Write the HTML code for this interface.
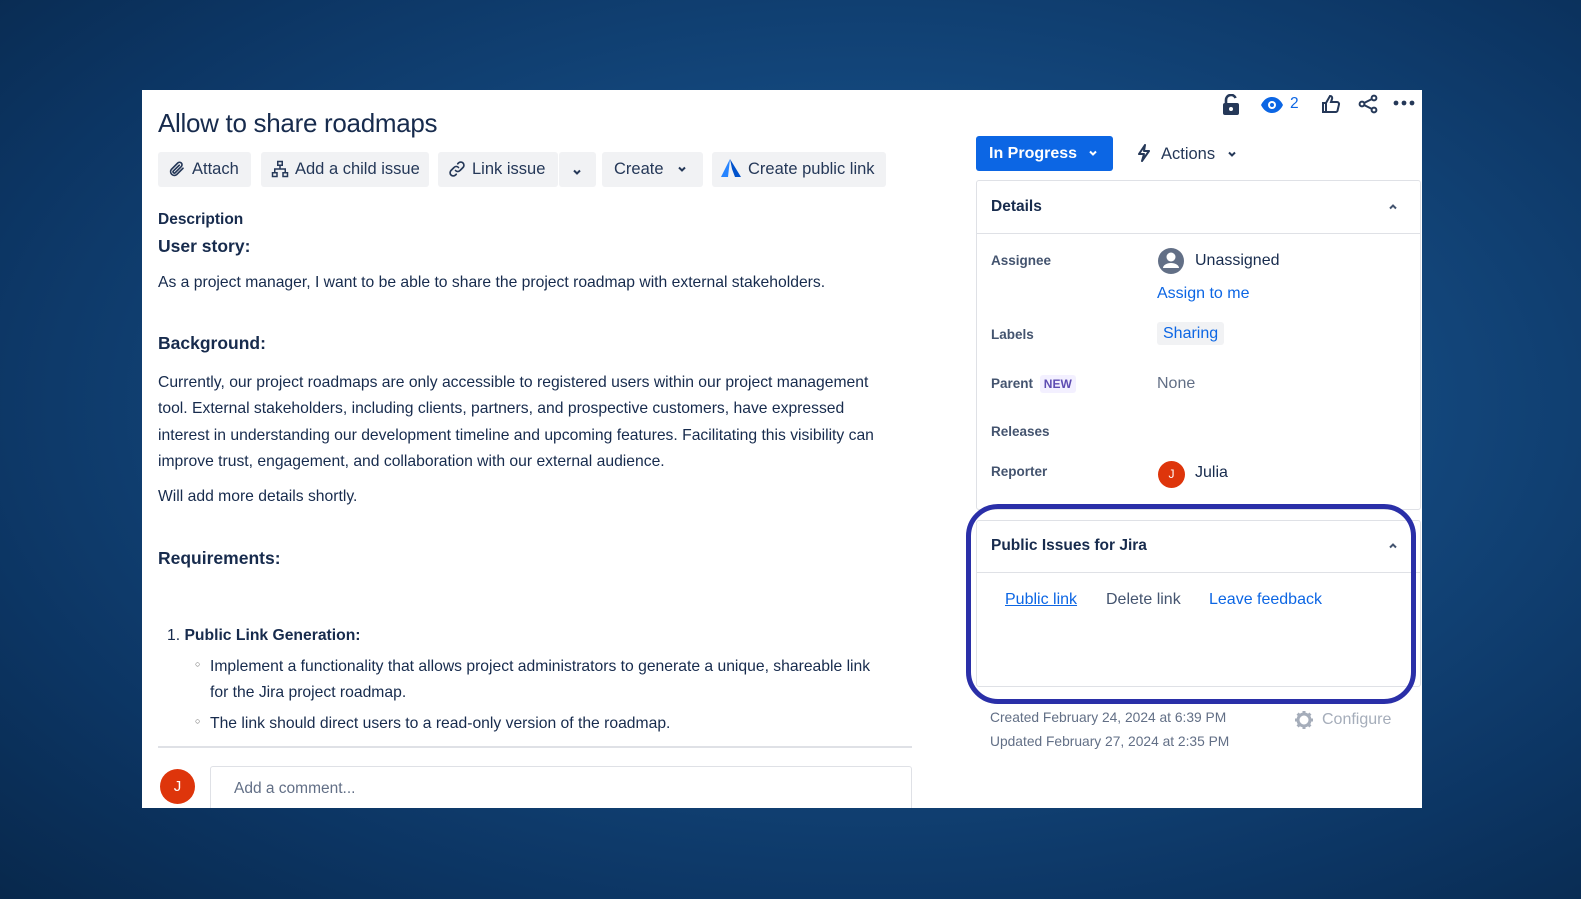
<!DOCTYPE html>
<html><head><meta charset="utf-8"><style>
*{margin:0;padding:0;box-sizing:border-box}
body{width:1581px;height:899px;overflow:hidden;font-family:"Liberation Sans",sans-serif;color:#172b4d;position:relative;
background:radial-gradient(ellipse at 55% 45%,#1d5e98 0%,#14497f 40%,#0c3563 75%,#08284c 100%);}
.a{position:absolute;white-space:nowrap}
#panel{position:absolute;left:142px;top:90px;width:1280px;height:718px;background:#fff;overflow:hidden}
.btn{position:absolute;top:62px;height:35px;background:#f1f2f4;border-radius:3px;font-size:16.5px;line-height:35px;color:#253858;padding-left:10px}
.btn svg{vertical-align:-4px;margin-right:6px}
.p{font-size:15.7px;color:#172b4d}
.h{font-size:17.5px;font-weight:bold}
.lbl{font-size:13.5px;font-weight:bold;color:#44546f}
.box{position:absolute;border:1px solid #dfe1e6;border-radius:3px;background:#fff}
</style></head><body>
<div id="panel">
<div class="a" style="left:16px;top:18px;font-size:26px;color:#172b4d;letter-spacing:-0.3px">Allow to share roadmaps</div>

<div class="btn" style="left:16px;width:93px"><svg width="18" height="18" viewBox="0 0 24 24" fill="none" stroke="#253858" stroke-width="2.2" stroke-linecap="round"><path d="M20 11l-8.5 8.5a5 5 0 01-7-7L13 4a3.3 3.3 0 014.7 4.7L9.6 17a1.7 1.7 0 01-2.4-2.4L15 7"/></svg>Attach</div>
<div class="btn" style="left:119px;width:168px"><svg width="18" height="18" viewBox="0 0 24 24" fill="none" stroke="#253858" stroke-width="2"><rect x="9" y="2" width="6" height="5"/><rect x="2" y="17" width="6" height="5"/><rect x="16" y="17" width="6" height="5"/><path d="M12 7v5M5 17v-5h14v5"/></svg>Add a child issue</div>
<div class="btn" style="left:296px;width:120px"><svg width="18" height="18" viewBox="0 0 24 24" fill="none" stroke="#253858" stroke-width="2.2" stroke-linecap="round"><path d="M10 14a4 4 0 006 0l4-4a4 4 0 00-6-6l-1 1M14 10a4 4 0 00-6 0l-4 4a4 4 0 006 6l1-1"/></svg>Link issue</div>
<div class="btn" style="left:417px;width:37px;padding-left:12px"><svg width="12" height="12" viewBox="0 0 12 12"><path d="M3 4.5l3 3 3-3" stroke="#253858" stroke-width="2" fill="none"/></svg></div>
<div class="btn" style="left:460px;width:101px;padding-left:12px">Create <svg width="12" height="12" viewBox="0 0 12 12" style="margin-left:8px;vertical-align:-1px"><path d="M3 4.5l3 3 3-3" stroke="#253858" stroke-width="2" fill="none"/></svg></div>
<div class="btn" style="left:570px;width:174px;padding-left:8px"><svg width="22" height="20" viewBox="0 0 22 20"><path d="M10 1L1 19h7z" fill="#2684ff"/><path d="M10 1l2 10 3 8h6z" fill="#0052cc"/></svg>Create public link</div>

<div class="a" style="left:16px;top:121px;font-size:15.5px;font-weight:bold;color:#172b4d">Description</div>
<div class="a h" style="left:16px;top:146px">User story:</div>
<div class="a p" style="left:16px;top:184px">As a project manager, I want to be able to share the project roadmap with external stakeholders.</div>
<div class="a h" style="left:16px;top:243px">Background:</div>
<div class="a p" style="left:16px;top:280px;line-height:26.3px">Currently, our project roadmaps are only accessible to registered users within our project management<br>tool. External stakeholders, including clients, partners, and prospective customers, have expressed<br>interest in understanding our development timeline and upcoming features. Facilitating this visibility can<br>improve trust, engagement, and collaboration with our external audience.</div>
<div class="a p" style="left:16px;top:398px">Will add more details shortly.</div>
<div class="a h" style="left:16px;top:458px">Requirements:</div>
<div class="a p" style="left:25px;top:537px">1. <b>Public Link Generation:</b></div>
<div class="a p" style="left:53px;top:569px;font-size:9px;color:#555">○</div>
<div class="a p" style="left:68px;top:568px">Implement a functionality that allows project administrators to generate a unique, shareable link</div>
<div class="a p" style="left:68px;top:594px">for the Jira project roadmap.</div>
<div class="a p" style="left:53px;top:626px;font-size:9px;color:#555">○</div>
<div class="a p" style="left:68px;top:625px">The link should direct users to a read-only version of the roadmap.</div>
<div class="a" style="left:16px;top:656px;width:754px;height:2px;background:#dfe1e6"></div>
<div class="a" style="left:18px;top:679px;width:35px;height:35px;border-radius:50%;background:#de350b;color:#fff;font-size:15px;text-align:center;line-height:35px">J</div>
<div class="a" style="left:68px;top:676px;width:702px;height:50px;border:1px solid #dfe1e6;border-radius:3px;font-size:15.5px;color:#626f86;padding:13px 0 0 23px">Add a comment...</div>

<!-- top right icons -->
<svg class="a" style="left:1079px;top:4px" width="20" height="22" viewBox="0 0 20 22"><path d="M5 10V6a5 5 0 019.6-2" stroke="#253858" stroke-width="2.6" fill="none"/><rect x="2" y="9" width="16" height="12" rx="2" fill="#253858"/><circle cx="10" cy="15" r="2" fill="#fff"/></svg>
<svg class="a" style="left:1118px;top:7px" width="24" height="16" viewBox="0 0 24 16"><path d="M1 8C4 2 8 0 12 0s8 2 11 8c-3 6-7 8-11 8S4 14 1 8z" fill="#0c66e4"/><circle cx="12" cy="8" r="4" fill="#fff"/><circle cx="12" cy="8" r="2" fill="#0c66e4"/></svg>
<div class="a" style="left:1148px;top:5px;font-size:15.5px;color:#0c66e4">2</div>
<svg class="a" style="left:1179px;top:4px" width="20" height="20" viewBox="0 0 20 20" fill="none" stroke="#253858" stroke-width="2"><path d="M2 9h3v9H2zM5 9l4-7c2 0 2.5 1.5 2 3l-1 3h6a2 2 0 012 2.4l-1.3 5.5A2 2 0 0114.8 18H5"/></svg>
<svg class="a" style="left:1216px;top:4px" width="20" height="20" viewBox="0 0 20 20" fill="none" stroke="#253858" stroke-width="2"><circle cx="16" cy="4" r="2.4"/><circle cx="4" cy="10" r="2.4"/><circle cx="16" cy="16" r="2.4"/><path d="M6 9l8-4M6 11l8 4"/></svg>
<svg class="a" style="left:1251px;top:10px" width="22" height="6" viewBox="0 0 22 6"><circle cx="3" cy="3" r="2.4" fill="#253858"/><circle cx="11" cy="3" r="2.4" fill="#253858"/><circle cx="19" cy="3" r="2.4" fill="#253858"/></svg>

<div class="a" style="left:834px;top:46px;width:137px;height:35px;background:#0c66e4;border-radius:3px;color:#fff;font-size:16px;font-weight:bold;line-height:35px;padding-left:13px">In Progress <svg width="12" height="12" viewBox="0 0 12 12" style="margin-left:6px;vertical-align:-1px"><path d="M3 4.5l3 3 3-3" stroke="#fff" stroke-width="2" fill="none"/></svg></div>
<div class="a" style="left:994px;top:54px;font-size:16.5px;color:#253858"><svg width="16" height="18" viewBox="0 0 16 18" style="vertical-align:-3px;margin-right:9px"><path d="M9 1L3 10h5l-2 7 7-10H8z" fill="none" stroke="#253858" stroke-width="2" stroke-linejoin="round"/></svg>Actions <svg width="12" height="12" viewBox="0 0 12 12" style="margin-left:6px;vertical-align:-1px"><path d="M3 4.5l3 3 3-3" stroke="#253858" stroke-width="2" fill="none"/></svg></div>

<div class="box" style="left:834px;top:90px;width:445px;height:330px">
 <div class="a" style="left:14px;top:17px;font-size:15.5px;font-weight:bold">Details</div>
 <svg class="a" style="left:410px;top:20px" width="12" height="12" viewBox="0 0 12 12"><path d="M3 7.5l3-3 3 3" stroke="#44546f" stroke-width="2" fill="none"/></svg>
 <div class="a" style="left:0;top:52px;width:443px;height:1px;background:#dfe1e6"></div>
 <div class="a lbl" style="left:14px;top:72px">Assignee</div>
 <svg class="a" style="left:180px;top:66px" width="28" height="28" viewBox="0 0 28 28"><circle cx="14" cy="14" r="13" fill="#626f86"/><circle cx="14" cy="10" r="4.5" fill="#fff"/><path d="M6 21a8 5 0 0116 0z" fill="#fff"/></svg>
 <div class="a" style="left:218px;top:71px;font-size:16px">Unassigned</div>
 <div class="a" style="left:180px;top:104px;font-size:16px;color:#0c66e4">Assign to me</div>
 <div class="a lbl" style="left:14px;top:146px">Labels</div>
 <div class="a" style="left:180px;top:141px;height:23px;padding:0 6px;background:#f1f2f4;border-radius:3px;font-size:16px;color:#0c66e4;line-height:23px">Sharing</div>
 <div class="a lbl" style="left:14px;top:195px">Parent <span style="background:#f3f0ff;color:#5e4db2;font-size:12px;padding:2px 4px;border-radius:3px;margin-left:3px">NEW</span></div>
 <div class="a" style="left:180px;top:194px;font-size:16px;color:#626f86">None</div>
 <div class="a lbl" style="left:14px;top:243px">Releases</div>
 <div class="a lbl" style="left:14px;top:283px">Reporter</div>
 <div class="a" style="left:181px;top:280px;width:27px;height:27px;border-radius:50%;background:#de350b;color:#fff;font-size:12px;text-align:center;line-height:27px">J</div>
 <div class="a" style="left:218px;top:283px;font-size:16px">Julia</div>
</div>

<div class="box" style="left:834px;top:430px;width:445px;height:167px">
 <div class="a" style="left:14px;top:16px;font-size:15.5px;font-weight:bold">Public Issues for Jira</div>
 <svg class="a" style="left:410px;top:19px" width="12" height="12" viewBox="0 0 12 12"><path d="M3 7.5l3-3 3 3" stroke="#44546f" stroke-width="2" fill="none"/></svg>
 <div class="a" style="left:0;top:51px;width:443px;height:1px;background:#dfe1e6"></div>
 <div class="a" style="left:28px;top:70px;font-size:16px;color:#0c66e4;text-decoration:underline">Public link</div>
 <div class="a" style="left:129px;top:70px;font-size:16px;color:#44546f">Delete link</div>
 <div class="a" style="left:232px;top:70px;font-size:16px;color:#0c66e4">Leave feedback</div>
</div>
<div class="a" style="left:824px;top:414px;width:450px;height:200px;border:5px solid #2a2fa8;border-radius:32px"></div>

<div class="a" style="left:848px;top:620px;font-size:13.8px;color:#626f86">Created February 24, 2024 at 6:39 PM</div>
<div class="a" style="left:848px;top:644px;font-size:13.8px;color:#626f86">Updated February 27, 2024 at 2:35 PM</div>
<svg class="a" style="left:1152px;top:620px" width="20" height="20" viewBox="0 0 20 20"><circle cx="10" cy="10" r="6" fill="none" stroke="#a5adba" stroke-width="3"/><path d="M10 1v4M10 15v4M1 10h4M15 10h4M3.6 3.6l2.8 2.8M13.6 13.6l2.8 2.8M3.6 16.4l2.8-2.8M13.6 6.4l2.8-2.8" stroke="#a5adba" stroke-width="3"/></svg>
<div class="a" style="left:1180px;top:621px;font-size:16px;color:#a5adba">Configure</div>
</div>
</body></html>
